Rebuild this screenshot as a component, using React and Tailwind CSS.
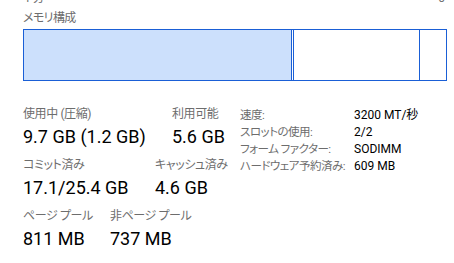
function Stat({ label, value, w }) {
  return (
    <div className={`shrink-0 ${w || ''}`}>
      <div className="text-[12px] leading-[16px] tracking-[-0.4px] text-[#6d6d6d] whitespace-nowrap">{label}</div>
      <div className="text-[18px] leading-[24px] mt-[3px] whitespace-nowrap">{value}</div>
    </div>
  );
}

function Row({ label, value }) {
  return (
    <>
      <div className="text-[11.5px] tracking-[-0.5px] text-[#6d6d6d]">{label}</div>
      <div className="text-[12px]">{value}</div>
    </>
  );
}

export default function App() {
  return (
    <div className="w-[454px] h-[263px] bg-white overflow-hidden text-black font-['Segoe_UI','Roboto','Noto_Sans_CJK_JP',sans-serif] [font-feature-settings:'palt']">
      <div className="flex justify-between items-end pl-[23px] pr-[9px] h-[5px] overflow-hidden text-[12px] leading-[14px] text-[#707070]">
        <span className="shrink-0">4 分</span>
        <span className="shrink-0">0</span>
      </div>
      <div className="pl-[23px] mt-[5px] text-[12px] leading-[16px] tracking-[-0.6px] text-[#6d6d6d]">メモリ構成</div>
      <div className="ml-[23px] mt-[3px] w-[424px] h-[52px] border border-[#1a5fd6] flex">
        <div className="w-[268px] h-full bg-[#cce0fc] border-r border-[#1a5fd6]"></div>
        <div className="w-[1px] h-full"></div>
        <div className="w-[127px] h-full border-l border-r border-[#1a5fd6]"></div>
        <div className="flex-1 h-full"></div>
      </div>
      <div className="flex items-start mt-[25px]">
        <div className="pl-[23px] w-[240px] shrink-0 flex flex-col gap-[8px]">
          <div className="flex">
            <Stat w="w-[149px]" label="使用中 (圧縮)" value="9.7 GB (1.2 GB)" />
            <Stat label="利用可能" value="5.6 GB" />
          </div>
          <div className="flex">
            <Stat w="w-[132px]" label="コミット済み" value="17.1/25.4 GB" />
            <Stat label="キャッシュ済み" value="4.6 GB" />
          </div>
          <div className="flex">
            <Stat w="w-[87px]" label="ページ プール" value="811 MB" />
            <Stat label="非ページ プール" value="737 MB" />
          </div>
        </div>
        <div className="mt-[1px] grid grid-cols-[114px_auto] items-baseline leading-[17px] whitespace-nowrap">
          <Row label="速度:" value="3200 MT/秒" />
          <Row label="スロットの使用:" value="2/2" />
          <Row label="フォーム ファクター:" value="SODIMM" />
          <Row label="ハードウェア予約済み:" value="609 MB" />
        </div>
      </div>
    </div>
  );
}
